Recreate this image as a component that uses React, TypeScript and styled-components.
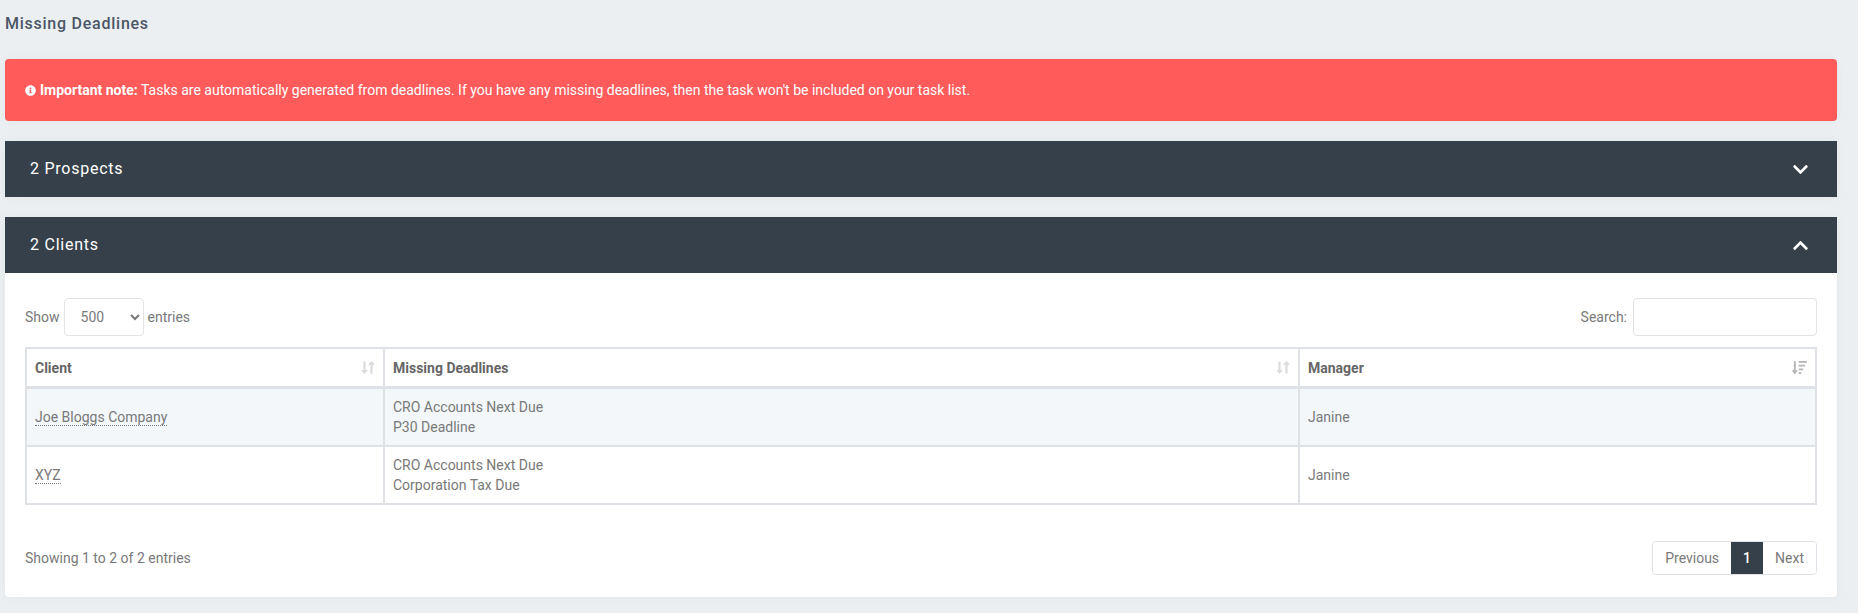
import React from 'react';
import styled, { createGlobalStyle } from 'styled-components';
import { FaChevronDown, FaChevronUp, FaInfoCircle, FaLongArrowAltDown, FaLongArrowAltUp, FaSortAmountDown } from 'react-icons/fa';

const GlobalStyle = createGlobalStyle`
  html, body {
    margin: 0;
    padding: 0;
    background: #ebeff2;
    font-family: Roboto, "Liberation Sans", sans-serif;
    font-size: 14px;
    line-height: 20px;
    color: #797979;
  }
`;

const Page = styled.div`
  padding: 0 21px 16px 5px;
`;

const Title = styled.h1`
  margin: 0;
  padding: 12px 0 23px;
  font-size: 16px;
  line-height: 24px;
  font-weight: 500;
  letter-spacing: 0.75px;
  color: #4c5667;
`;

const Alert = styled.div`
  height: 62px;
  display: flex;
  align-items: center;
  gap: 4px;
  padding: 0 20px;
  box-sizing: border-box;
  margin-bottom: 20px;
  background: #ff5b5b;
  color: #fff;
  border-radius: 4px;
  box-shadow: 0 0 8px rgba(0, 0, 0, 0.04);

  strong {
    font-weight: 700;
  }
`;

const InfoIcon = styled(FaInfoCircle)`
  width: 11px;
  height: 11px;
  flex: none;
`;

const Card = styled.section`
  margin-bottom: 20px;
  background: #fff;
  border-radius: 0 0 4px 4px;
  box-shadow: 0 0 12px rgba(0, 0, 0, 0.04);
`;

const CardHeader = styled.header<{ $open: boolean }>`
  height: 56px;
  display: flex;
  align-items: center;
  justify-content: space-between;
  padding: 0 28px 0 25px;
  margin-bottom: ${({ $open }) => ($open ? '0' : '2px')};
  background: #36404a;
  color: #fff;
  font-size: 16px;
  font-weight: 400;
  letter-spacing: 0.75px;

  svg {
    width: 17px;
    height: 17px;
  }
`;

const CardBody = styled.div`
  padding: 25px 20px 22px;
`;

const Toolbar = styled.div`
  display: flex;
  align-items: center;
  justify-content: space-between;
  margin-bottom: 11px;
`;

const Label = styled.label`
  display: flex;
  align-items: center;
  gap: 4px;
`;

const Select = styled.select`
  width: 80px;
  height: 38px;
  padding: 0 12px;
  border: 1px solid #e3e3e3;
  border-radius: 4px;
  background: #fff;
  color: #797979;
  font: inherit;
  outline: none;
`;

const SearchInput = styled.input`
  width: 184px;
  height: 38px;
  box-sizing: border-box;
  margin-left: 2px;
  border: 1px solid #e3e3e3;
  border-radius: 4px;
  background: #fff;
  outline: none;
`;

const Table = styled.table`
  width: 1792px;
  table-layout: fixed;
  border-collapse: collapse;
  border: 2px solid #dee2e6;
`;

const Th = styled.th`
  height: 37px;
  padding: 0 8px;
  border: 2px solid #dee2e6;
  border-bottom-width: 3px;
  text-align: left;
  font-weight: 700;
  color: #666;
`;

const ThInner = styled.div`
  display: flex;
  align-items: center;
  justify-content: space-between;
`;

const SortIcon = styled.span<{ $active?: boolean }>`
  display: flex;
  color: ${({ $active }) => ($active ? '#b4b4b4' : '#dcdcdc')};

  svg {
    width: ${({ $active }) => ($active ? '15px' : '7px')};
    height: 15px;
  }
`;

const Row = styled.tr<{ $striped?: boolean }>`
  background: ${({ $striped }) => ($striped ? '#f3f7f9' : '#fff')};
`;

const Td = styled.td`
  padding: 8px;
  border: 2px solid #dee2e6;
  vertical-align: middle;
`;

const ClientLink = styled.a`
  color: #797979;
  border-bottom: 1px dotted #797979;
`;

const Footer = styled.div`
  display: flex;
  align-items: center;
  justify-content: space-between;
  margin-top: 36px;
`;

const Pager = styled.div`
  display: flex;
  border: 1px solid #dee2e6;
  border-radius: 4px;
  overflow: hidden;
`;

const PageButton = styled.span<{ $active?: boolean }>`
  padding: 6px 12px;
  line-height: 20px;
  background: ${({ $active }) => ($active ? '#36404a' : '#fff')};
  color: ${({ $active }) => ($active ? '#fff' : '#797979')};
  font-weight: ${({ $active }) => ($active ? 500 : 400)};
`;

const rows = [
  { client: 'Joe Bloggs Company', deadlines: ['CRO Accounts Next Due', 'P30 Deadline'], manager: 'Janine' },
  { client: 'XYZ', deadlines: ['CRO Accounts Next Due', 'Corporation Tax Due'], manager: 'Janine' },
];

const UnsortedIcon = () => (
  <SortIcon>
    <FaLongArrowAltDown />
    <FaLongArrowAltUp />
  </SortIcon>
);

export default function App() {
  return (
    <Page>
      <GlobalStyle />
      <Title>Missing Deadlines</Title>
      <Alert>
        <InfoIcon />
        <span>
          <strong>Important note:</strong> Tasks are automatically generated from deadlines. If you have any missing
          deadlines, then the task won't be included on your task list.
        </span>
      </Alert>

      <Card>
        <CardHeader $open={false}>
          2 Prospects
          <FaChevronDown />
        </CardHeader>
      </Card>

      <Card>
        <CardHeader $open>
          2 Clients
          <FaChevronUp />
        </CardHeader>
        <CardBody>
          <Toolbar>
            <Label>
              Show
              <Select defaultValue="500">
                <option>500</option>
              </Select>
              entries
            </Label>
            <Label>
              Search:
              <SearchInput />
            </Label>
          </Toolbar>

          <Table>
            <colgroup>
              <col width="358" />
              <col width="915" />
              <col />
            </colgroup>
            <thead>
              <tr>
                <Th>
                  <ThInner>
                    Client
                    <UnsortedIcon />
                  </ThInner>
                </Th>
                <Th>
                  <ThInner>
                    Missing Deadlines
                    <UnsortedIcon />
                  </ThInner>
                </Th>
                <Th>
                  <ThInner>
                    Manager
                    <SortIcon $active>
                      <FaSortAmountDown />
                    </SortIcon>
                  </ThInner>
                </Th>
              </tr>
            </thead>
            <tbody>
              {rows.map((row, i) => (
                <Row key={row.client} $striped={i === 0}>
                  <Td>
                    <ClientLink>{row.client}</ClientLink>
                  </Td>
                  <Td>
                    {row.deadlines.map((d) => (
                      <div key={d}>{d}</div>
                    ))}
                  </Td>
                  <Td>{row.manager}</Td>
                </Row>
              ))}
            </tbody>
          </Table>

          <Footer>
            <span>Showing 1 to 2 of 2 entries</span>
            <Pager>
              <PageButton>Previous</PageButton>
              <PageButton $active>1</PageButton>
              <PageButton>Next</PageButton>
            </Pager>
          </Footer>
        </CardBody>
      </Card>
    </Page>
  );
}
